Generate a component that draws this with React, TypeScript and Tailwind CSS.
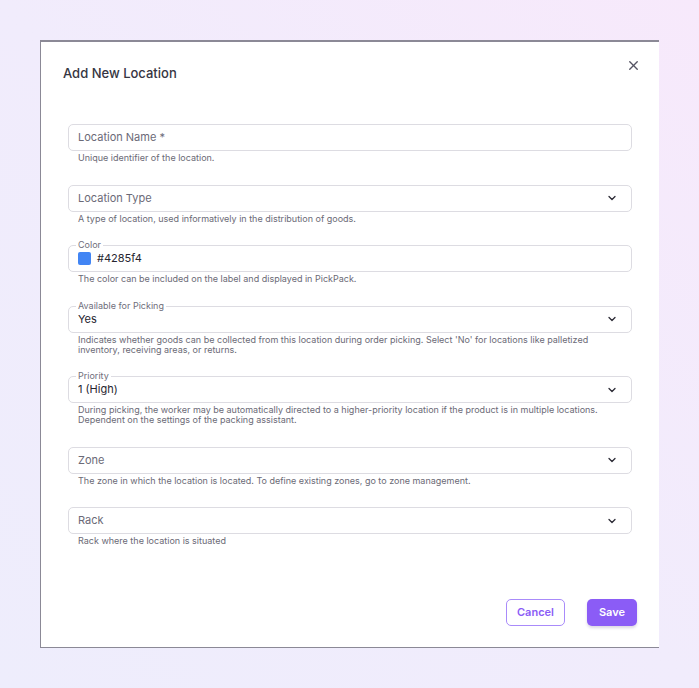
import { ChevronDown, X } from "lucide-react";

type FieldProps = {
  label?: string;
  placeholder?: string;
  value?: string;
  select?: boolean;
  swatch?: string;
  help: string[];
};

function Field({ label, placeholder, value, select, swatch, help }: FieldProps) {
  return (
    <div>
      <div className="relative flex h-[27px] items-center rounded-[5px] border border-[#dddce2] pl-[9px] pr-[13px]">
        {label && (
          <span className="absolute -top-[6px] left-[7px] bg-white px-[2px] text-[9px] leading-[10px] text-[#6f6e7b]">
            {label}
          </span>
        )}
        {swatch && (
          <span className="mr-[6px] h-[13px] w-[13px] rounded-[2px]" style={{ backgroundColor: swatch }} />
        )}
        <span
          className={
            value
              ? "flex-1 text-[11px] text-[#26252f]"
              : "flex-1 text-[11px] text-[#6b6a77]"
          }
        >
          {value ?? placeholder}
        </span>
        {select && <ChevronDown size={12} strokeWidth={2.6} className="text-[#2b2a35]" />}
      </div>
      <div className="mt-[2px] pl-[10px] text-[9px] leading-[10px] text-[#6b6a76]">
        {help.map((h) => (
          <p key={h}>{h}</p>
        ))}
      </div>
    </div>
  );
}

export default function App() {
  return (
    <div
      className="h-[688px] w-full bg-gradient-to-tr from-[#eeedfc] via-[#f1ecfc] to-[#f7e9fb] pl-[40px] pt-[40px]"
      style={{ fontFamily: "Inter, 'Noto Sans', sans-serif" }}
    >
      <div className="relative flex h-[608px] w-[619px] flex-col border-b border-l border-t-2 border-[#8b8996] bg-white">
        <button className="absolute right-[18px] top-[16px] text-[#555463]">
          <X size={15} strokeWidth={2.2} />
        </button>
        <h2 className="pl-[22px] pt-[21px] text-[13px] font-medium leading-[20px] text-[#363542]">
          Add New Location
        </h2>
        <div className="mt-[41px] flex flex-col gap-[21.5px] px-[27px]">
          <Field placeholder="Location Name *" help={["Unique identifier of the location."]} />
          <Field
            placeholder="Location Type"
            select
            help={["A type of location, used informatively in the distribution of goods."]}
          />
          <Field
            label="Color"
            value="#4285f4"
            swatch="#4285f4"
            help={["The color can be included on the label and displayed in PickPack."]}
          />
          <Field
            label="Available for Picking"
            value="Yes"
            select
            help={[
              "Indicates whether goods can be collected from this location during order picking. Select 'No' for locations like palletized",
              "inventory, receiving areas, or returns.",
            ]}
          />
          <Field
            label="Priority"
            value="1 (High)"
            select
            help={[
              "During picking, the worker may be automatically directed to a higher-priority location if the product is in multiple locations.",
              "Dependent on the settings of the packing assistant.",
            ]}
          />
          <Field
            placeholder="Zone"
            select
            help={["The zone in which the location is located. To define existing zones, go to zone management."]}
          />
          <Field placeholder="Rack" select help={["Rack where the location is situated"]} />
        </div>
        <div className="mt-auto flex justify-end gap-[22px] pb-[21px] pr-[22px]">
          <button className="h-[27px] w-[59px] rounded-[5px] border border-[#a98bfa] text-[11px] font-semibold text-[#8b5cf6]">
            Cancel
          </button>
          <button className="h-[27px] w-[50px] rounded-[5px] bg-[#8b5cf6] text-[11px] font-semibold text-white shadow-[0_2px_3px_rgba(80,60,120,0.2)]">
            Save
          </button>
        </div>
      </div>
    </div>
  );
}
